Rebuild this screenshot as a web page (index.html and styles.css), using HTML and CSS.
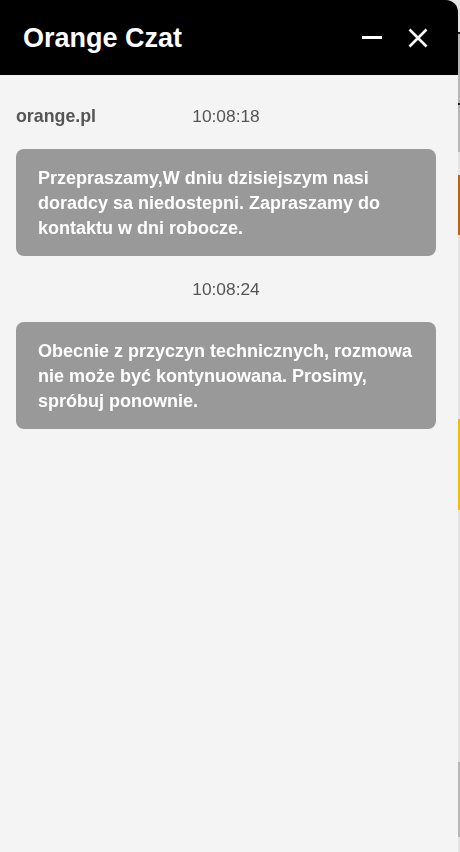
FILE: index.html
```html
<!DOCTYPE html>
<html lang="pl">
<head>
<meta charset="utf-8">
<title>Orange Czat</title>
<link rel="stylesheet" href="styles.css">
</head>
<body>
<div class="page">
  <div class="stripe s-light s-top"></div>
  <div class="stripe s-dark"></div>
  <div class="stripe s-grey s-grey-a"></div>
  <div class="stripe s-dark"></div>
  <div class="stripe s-grey s-grey-b"></div>
  <div class="stripe s-light s-gap-a"></div>
  <div class="stripe s-orange"></div>
  <div class="stripe s-light s-gap-b"></div>
  <div class="stripe s-yellow"></div>
  <div class="stripe s-light s-gap-c"></div>
  <div class="stripe s-grey s-grey-c"></div>
</div>

<div class="chat">
  <header class="chat-header">
    <h1 class="chat-title">Orange Czat</h1>
    <div class="chat-actions">
      <button class="icon-btn" aria-label="Minimalizuj"><span class="minus"></span></button>
      <button class="icon-btn" aria-label="Zamknij">
        <svg width="20" height="20" viewBox="0 0 20 20"><path d="M1.5 1.5 L18.5 18.5 M18.5 1.5 L1.5 18.5" stroke="#fff" stroke-width="2.6" stroke-linecap="butt" fill="none"/></svg>
      </button>
    </div>
  </header>
  <main class="chat-body">
    <section class="msg-group">
      <div class="meta">
        <span class="sender">orange.pl</span>
        <span class="time">10:08:18</span>
        <span></span>
      </div>
      <div class="bubble">Przepraszamy,W dniu dzisiejszym nasi doradcy sa niedostepni. Zapraszamy do kontaktu w dni robocze.</div>
    </section>
    <section class="msg-group">
      <div class="meta">
        <span class="sender"></span>
        <span class="time">10:08:24</span>
        <span></span>
      </div>
      <div class="bubble">Obecnie z przyczyn technicznych, rozmowa nie może być kontynuowana. Prosimy, spróbuj ponownie.</div>
    </section>
  </main>
</div>
</body>
</html>
```

FILE: styles.css
```css
html, body {
  margin: 0;
  padding: 0;
  height: 100%;
}
body {
  background: #e5e5e5;
  font-family: "Liberation Sans", Arial, sans-serif;
  overflow: hidden;
}

/* underlying page, visible only at the right edge */
.page {
  display: flex;
  flex-direction: column;
}
.stripe { width: 100%; }
.s-light { background: #e5e5e5; }
.s-dark { background: #1a1a1a; height: 2px; }
.s-grey { background: #b7b7b7; }
.s-orange { background: #c86400; height: 60px; }
.s-yellow { background: #efbf00; height: 91px; }
.s-top { height: 32px; }
.s-grey-a { height: 69px; }
.s-grey-b { height: 47px; }
.s-gap-a { height: 23px; }
.s-gap-b { height: 184px; }
.s-gap-c { height: 252px; }
.s-grey-c { height: 75px; }

/* chat overlay */
.chat {
  position: fixed;
  top: 0;
  left: 0;
  width: 458px;
  height: 100%;
  display: flex;
  flex-direction: column;
  background: #f4f4f4;
  border-top-right-radius: 12px;
  overflow: hidden;
}
.chat-header {
  height: 75px;
  flex: 0 0 75px;
  background: #000;
  display: flex;
  align-items: center;
  justify-content: space-between;
  padding: 0 30px 0 23px;
  box-sizing: border-box;
}
.chat-title {
  margin: 0;
  color: #fff;
  font-size: 27px;
  font-weight: bold;
  line-height: 1;
  padding-top: 2px;
}
.chat-actions {
  display: flex;
  align-items: center;
  gap: 26px;
}
.icon-btn {
  background: none;
  border: 0;
  padding: 0;
  margin: 0;
  display: flex;
  align-items: center;
  justify-content: center;
  cursor: pointer;
}
.minus {
  display: block;
  width: 20px;
  height: 3.5px;
  background: #fff;
}
.chat-body {
  flex: 1;
  padding: 31px 22px 0 16px;
  display: flex;
  flex-direction: column;
  gap: 23px;
}
.msg-group {
  display: flex;
  flex-direction: column;
  gap: 23px;
}
.meta {
  display: grid;
  grid-template-columns: 1fr auto 1fr;
  align-items: center;
  line-height: 20px;
  font-size: 17.33px;
  color: #555;
}
.sender {
  font-weight: bold;
  font-size: 17.8px;
}
.time {
  text-align: center;
}
.bubble {
  background: #999999;
  color: #fff;
  font-weight: bold;
  font-size: 18px;
  line-height: 25px;
  padding: 17px 16px 15px 22px;
  border-radius: 8px;
}
```
